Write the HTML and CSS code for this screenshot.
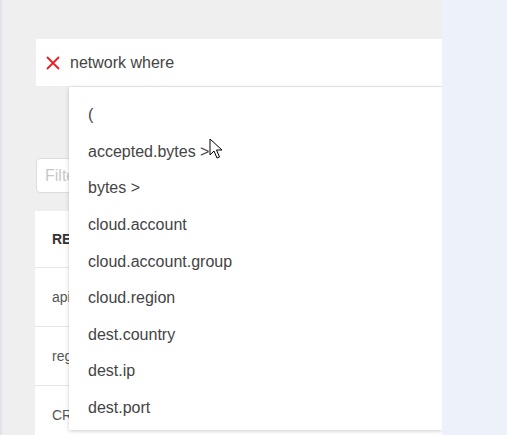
FILE: index.html
```html
<!DOCTYPE html>
<html>
<head>
<meta charset="utf-8">
<link rel="stylesheet" href="styles.css">
</head>
<body>
<div class="app">
  <div class="edge"></div>
  <div class="main">
    <div class="search">
      <svg class="clear" width="14" height="14" viewBox="0 0 14 14"><path d="M1 1 L13 13 M13 1 L1 13" stroke="#ec1c24" stroke-width="1.8" fill="none"/></svg>
      <span class="query">network where</span>
    </div>
    <div class="filter">Filter resources</div>
    <div class="table">
      <div class="row head">RESOURCE NAME</div>
      <div class="row">api-gateway-prod</div>
      <div class="row">region-us-east-1</div>
      <div class="row">CREATE_INSTANCE</div>
    </div>
    <ul class="dropdown">
      <li>(</li>
      <li>accepted.bytes &gt;</li>
      <li>bytes &gt;</li>
      <li>cloud.account</li>
      <li>cloud.account.group</li>
      <li>cloud.region</li>
      <li>dest.country</li>
      <li>dest.ip</li>
      <li>dest.port</li>
    </ul>
    <svg class="cursor" width="14" height="22" viewBox="0 0 14 22"><path d="M1 1 L1 17 L5 13 L8 20 L10.5 19 L7.5 12 L13 12 Z" fill="#fff" stroke="#000" stroke-width="1" stroke-linejoin="round"/></svg>
  </div>
  <div class="side"></div>
</div>
</body>
</html>
```
FILE: styles.css
```css
html, body {
  margin: 0;
  padding: 0;
  height: 100%;
  overflow: hidden;
}
body {
  font-family: "Liberation Sans", Arial, sans-serif;
}
.app {
  display: flex;
  height: 435px;
}
.edge {
  width: 2px;
  background: #dfe4ec;
}
.main {
  position: relative;
  width: 440px;
  background: #efefef;
  padding: 39px 0 0 34px;
  box-sizing: border-box;
  overflow: hidden;
}
.side {
  flex: 1;
  background: #edf1f9;
}
.search {
  height: 48px;
  background: #fff;
  display: flex;
  align-items: center;
  padding-left: 10px;
  border-bottom: 1px solid #ececec;
  box-sizing: border-box;
}
.clear {
  margin-right: 10px;
  margin-top: 1px;
}
.query {
  font-size: 16px;
  color: #444;
}
.filter {
  margin-top: 71px;
  width: 320px;
  height: 35px;
  box-sizing: border-box;
  border: 1px solid #dcdcdc;
  border-radius: 4px;
  background: #fff;
  padding-left: 8px;
  display: flex;
  align-items: center;
  font-size: 16px;
  color: #c8c8c8;
}
.table {
  margin-top: 18px;
  margin-left: -1px;
  background: #fff;
  height: 300px;
}
.row {
  height: 58px;
  border-bottom: 1px solid #e8e8e8;
  display: flex;
  align-items: center;
  padding-left: 17px;
  font-size: 14px;
  color: #555;
}
.row.head {
  height: 56px;
  font-weight: 700;
  color: #333;
}
.dropdown {
  position: absolute;
  top: 87px;
  left: 67px;
  width: 373px;
  height: 343px;
  margin: 0;
  padding: 10px 0 0 0;
  box-sizing: border-box;
  list-style: none;
  background: #fff;
  box-shadow: 0 1px 4px rgba(0,0,0,0.2);
}
.dropdown li {
  height: 36.6px;
  display: flex;
  align-items: center;
  padding-left: 19px;
  font-size: 16px;
  color: #444;
}
.cursor {
  position: absolute;
  left: 207px;
  top: 138px;
}
```
